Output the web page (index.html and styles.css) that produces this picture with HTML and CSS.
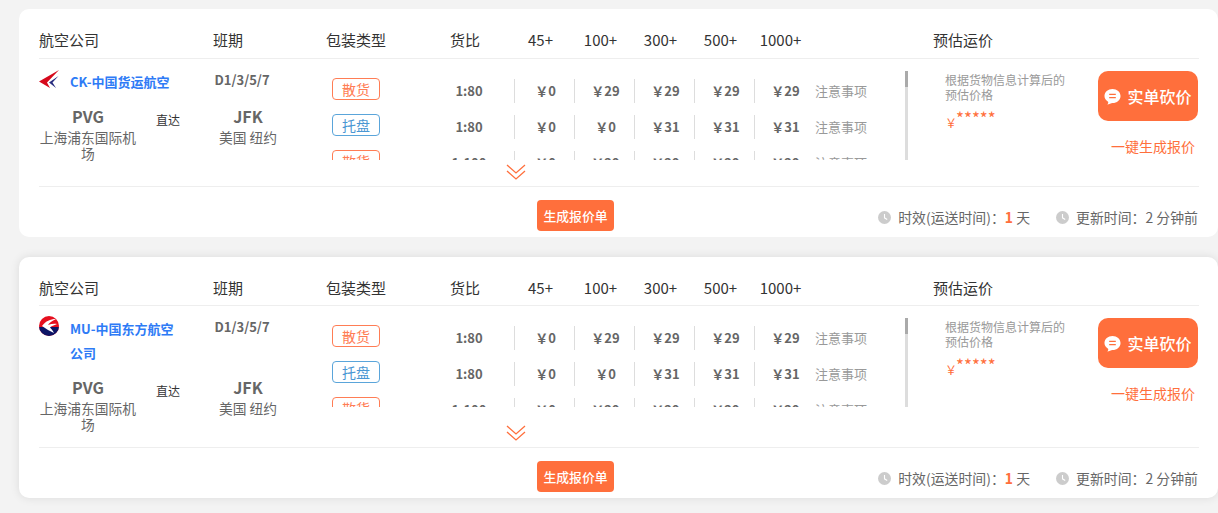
FILE: index.html
```html
<!DOCTYPE html>
<html lang="zh-CN">
<head>
<meta charset="utf-8">
<title>运价列表</title>
<link rel="stylesheet" href="styles.css">
</head>
<body>
<section class="card">
  <div class="head">
    <span class="h-air">航空公司</span><span class="h-sch">班期</span><span class="h-pack">包装类型</span><span class="h-ratio">货比</span>
    <span class="h-w">45+</span><span class="h-w">100+</span><span class="h-w">300+</span><span class="h-w">500+</span><span class="h-w">1000+</span>
    <span class="h-est">预估运价</span>
  </div>
  <div class="body">
    <div class="left">
      <div class="top">
        <svg class="logo" viewBox="0 0 20 20"><path d="M20 1 L0 12.500 L11 19 L8 13.500 Z" fill="#d6091c"/><path d="M19.500 7 L10 13.500 L17 19 L13.500 13.500 Z" fill="#2a2f80"/></svg>
        <a class="name">CK-中国货运航空</a>
        <span class="sch">D1/3/5/7</span>
      </div>
      <div class="route">
        <div class="port"><b>PVG</b><span>上海浦东国际机场</span></div>
        <div class="direct">直达</div>
        <div class="port dest"><b>JFK</b><span>美国 纽约</span></div>
      </div>
    </div>
    <div class="mid">
      <div class="scroll-wrap">
        <div class="rows">
          <div class="row"><span class="tag">散货</span><span class="ratio">1:80</span><span class="p">￥0</span><span class="p">￥29</span><span class="p">￥29</span><span class="p">￥29</span><span class="p">￥29</span><span class="note">注意事项</span></div>
          <div class="row"><span class="tag blue">托盘</span><span class="ratio">1:80</span><span class="p">￥0</span><span class="p">￥0</span><span class="p">￥31</span><span class="p">￥31</span><span class="p">￥31</span><span class="note">注意事项</span></div>
          <div class="row"><span class="tag">散货</span><span class="ratio">1:100</span><span class="p">￥0</span><span class="p">￥29</span><span class="p">￥29</span><span class="p">￥29</span><span class="p">￥29</span><span class="note">注意事项</span></div>
        </div>
        <div class="track"><div class="thumb"></div></div>
      </div>
      <svg class="chev" viewBox="0 0 20 16"><path d="M1 1 L10 9 L19 1 M1 7 L10 15 L19 7" fill="none" stroke="#ff6f3c" stroke-width="1.300"/></svg>
    </div>
    <div class="right">
      <div class="est"><p>根据货物信息计算后的预估价格</p><div class="stars"><i>￥</i>*****</div></div>
      <div class="act">
        <button class="bargain"><svg viewBox="0 0 18 18"><path d="M9 1 C13.700 1 17.500 4.300 17.500 8.500 C17.500 12.700 13.700 16 9 16 C7.500 16 5.500 17.500 3.500 17.500 C4.500 16.500 4.700 15.200 4.300 14.500 C2 13 .5 11 .5 8.500 C.5 4.300 4.300 1 9 1 Z" fill="#fff"/><path d="M5.500 6.800 H12.500 M5.500 10.200 H12.500" stroke="#ff6f3c" stroke-width="1.300"/></svg>实单砍价</button>
        <a class="quick">一键生成报价</a>
      </div>
    </div>
  </div>
  <div class="foot">
    <button class="gen">生成报价单</button>
    <div class="times">
      <span class="t"><svg class="clock" viewBox="0 0 12 12"><circle cx="6" cy="6" r="6" fill="#ccc"/><path d="M6 2.800 V6.300 L8.500 7.800" fill="none" stroke="#fff" stroke-width="1"/></svg>时效(运送时间)：<b>1</b> 天</span>
      <span class="t"><svg class="clock" viewBox="0 0 12 12"><circle cx="6" cy="6" r="6" fill="#ccc"/><path d="M6 2.800 V6.300 L8.500 7.800" fill="none" stroke="#fff" stroke-width="1"/></svg>更新时间：2 分钟前</span>
    </div>
  </div>
</section>

<section class="card raised">
  <div class="head">
    <span class="h-air">航空公司</span><span class="h-sch">班期</span><span class="h-pack">包装类型</span><span class="h-ratio">货比</span>
    <span class="h-w">45+</span><span class="h-w">100+</span><span class="h-w">300+</span><span class="h-w">500+</span><span class="h-w">1000+</span>
    <span class="h-est">预估运价</span>
  </div>
  <div class="body">
    <div class="left">
      <div class="top">
        <svg class="logo" viewBox="0 0 20 20"><defs><clipPath id="mu"><circle cx="10" cy="10" r="10"/></clipPath></defs><g clip-path="url(#mu)"><rect width="20" height="20" fill="#e60f1e"/><path d="M0 11 H20 V20 H0 Z" fill="#0d1566"/><path d="M3 10 C7 5 11 3 17 3 C13 5 10 7 9 9 C12 8 15 7.500 18 8 C15 9.500 12 10 11 11.500 C12.500 13 14 15 15 17 C11 15 7 13 3 10 Z" fill="#fff"/></g></svg>
        <a class="name">MU-中国东方航空公司</a>
        <span class="sch">D1/3/5/7</span>
      </div>
      <div class="route">
        <div class="port"><b>PVG</b><span>上海浦东国际机场</span></div>
        <div class="direct">直达</div>
        <div class="port dest"><b>JFK</b><span>美国 纽约</span></div>
      </div>
    </div>
    <div class="mid">
      <div class="scroll-wrap">
        <div class="rows">
          <div class="row"><span class="tag">散货</span><span class="ratio">1:80</span><span class="p">￥0</span><span class="p">￥29</span><span class="p">￥29</span><span class="p">￥29</span><span class="p">￥29</span><span class="note">注意事项</span></div>
          <div class="row"><span class="tag blue">托盘</span><span class="ratio">1:80</span><span class="p">￥0</span><span class="p">￥0</span><span class="p">￥31</span><span class="p">￥31</span><span class="p">￥31</span><span class="note">注意事项</span></div>
          <div class="row"><span class="tag">散货</span><span class="ratio">1:100</span><span class="p">￥0</span><span class="p">￥29</span><span class="p">￥29</span><span class="p">￥29</span><span class="p">￥29</span><span class="note">注意事项</span></div>
        </div>
        <div class="track"><div class="thumb"></div></div>
      </div>
      <svg class="chev" viewBox="0 0 20 16"><path d="M1 1 L10 9 L19 1 M1 7 L10 15 L19 7" fill="none" stroke="#ff6f3c" stroke-width="1.300"/></svg>
    </div>
    <div class="right">
      <div class="est"><p>根据货物信息计算后的预估价格</p><div class="stars"><i>￥</i>*****</div></div>
      <div class="act">
        <button class="bargain"><svg viewBox="0 0 18 18"><path d="M9 1 C13.700 1 17.500 4.300 17.500 8.500 C17.500 12.700 13.700 16 9 16 C7.500 16 5.500 17.500 3.500 17.500 C4.500 16.500 4.700 15.200 4.300 14.500 C2 13 .5 11 .5 8.500 C.5 4.300 4.300 1 9 1 Z" fill="#fff"/><path d="M5.500 6.800 H12.500 M5.500 10.200 H12.500" stroke="#ff6f3c" stroke-width="1.300"/></svg>实单砍价</button>
        <a class="quick">一键生成报价</a>
      </div>
    </div>
  </div>
  <div class="foot">
    <button class="gen">生成报价单</button>
    <div class="times">
      <span class="t"><svg class="clock" viewBox="0 0 12 12"><circle cx="6" cy="6" r="6" fill="#ccc"/><path d="M6 2.800 V6.300 L8.500 7.800" fill="none" stroke="#fff" stroke-width="1"/></svg>时效(运送时间)：<b>1</b> 天</span>
      <span class="t"><svg class="clock" viewBox="0 0 12 12"><circle cx="6" cy="6" r="6" fill="#ccc"/><path d="M6 2.800 V6.300 L8.500 7.800" fill="none" stroke="#fff" stroke-width="1"/></svg>更新时间：2 分钟前</span>
    </div>
  </div>
</section>
</body>
</html>
```
FILE: styles.css
```css
* { box-sizing: border-box; }
html, body { margin: 0; padding: 0; }
body {
  background: #f3f3f3;
  padding: 9px 0 0 19px;
  font-family: "Noto Sans CJK SC", "Noto Sans", sans-serif;
  color: #333;
  overflow: hidden;
}
p { margin: 0; }
.card {
  width: 1199px;
  height: 228px;
  margin-bottom: 20px;
  padding: 0 19px 0 20px;
  background: #fff;
  border-radius: 10px;
  display: flex;
  flex-direction: column;
}
.card.raised {
  height: 241px;
  box-shadow: 0 0 10px rgba(0, 0, 0, .1);
}
.head {
  height: 50px;
  flex: none;
  display: flex;
  align-items: center;
  padding-top: 12px;
  font-size: 15px;
  line-height: 20px;
  border-bottom: 1px solid #eee;
  color: #333;
}
.raised .head { height: 49px; padding-top: 14px; }
.head span { flex: none; white-space: nowrap; }
.h-air { width: 174px; }
.h-sch { width: 113px; }
.h-pack { width: 124px; }
.h-ratio { width: 60px; }
.h-w { width: 60px; text-align: center; padding-left: 1px; }
.h-est { margin-left: 123px; }

.body {
  flex: 1;
  display: flex;
  padding: 12px 0 6px;
  border-bottom: 1px solid #eee;
  min-height: 0;
}
.left { width: 287px; flex: none; padding-bottom: 9px; }
.top { display: flex; align-items: flex-start; height: 24px; }
.raised .top { height: 48px; }
.logo { width: 20px; height: 20px; flex: none; margin: -2px 11px 0 0; }
.name {
  width: 110px;
  flex: none;
  margin-top: -1px;
  font-size: 13px;
  font-weight: 700;
  line-height: 24px;
  color: #2e7bf6;
}
.sch {
  margin-left: 34.500px;
  font-size: 13px;
  font-weight: 700;
  line-height: 18px;
  color: #666;
}
.route { display: flex; margin-top: 11px; }
.port { width: 98px; text-align: center; flex: none; display: flex; flex-direction: column; color: #666; }
.port b { font-size: 16px; line-height: 20px; margin-bottom: 3px; }
.port span { font-size: 13.750px; line-height: 16px; }
.direct { width: 62px; flex: none; padding-top: 4px; text-align: center; font-size: 12px; line-height: 20px; color: #333; }
.port.dest { margin-left: 10px; width: 78px; }
.mid { width: 584px; flex: none; display: flex; flex-direction: column; }
.scroll-wrap { height: 89px; display: flex; flex: none; overflow: hidden; }
.rows { width: 579px; flex: none; padding-top: 2px; }
.row { height: 36px; display: flex; align-items: center; }
.tag {
  width: 48px;
  height: 22px;
  margin: 0 44px 4px 6px;
  flex: none;
  border: 1px solid #ff7d55;
  border-radius: 4px;
  color: #ff7d55;
  font-size: 14px;
  line-height: 20px;
  text-align: center;
}
.tag.blue { border-color: #5aa5da; color: #4a97d3; }
.ratio { width: 90px; flex: none; margin-bottom: 2px; text-align: center; font-size: 13px; font-weight: 700; color: #666; }
.p {
  width: 60px;
  height: 24px;
  flex: none;
  border-left: 1px solid #ddd;
  padding-left: 2px;
  text-align: center;
  font-size: 13px;
  font-weight: 700;
  line-height: 24px;
  color: #666;
}
.note { margin: 0 0 2px 1px; font-size: 13px; color: #999; white-space: nowrap; }
.track { width: 3px; height: 89px; flex: none; background: #ddd; }
.thumb { height: 16px; background: #aaa; }
.chev { width: 20px; height: 16px; margin: auto 0 0 180px; flex: none; }

.right { flex: 1; display: flex; min-width: 0; padding-left: 35px; }
.est { width: 153px; flex: none; padding-top: 1px; }
.est p { width: 122px; font-size: 12px; line-height: 15px; color: #999; }
.stars { font-size: 17px; line-height: 20px; margin-top: 6px; padding-left: 0; color: #ff6f3c; display: flex; }
.stars i { font-style: normal; font-size: 12px; line-height: 30px; margin-right: -1px; }
.act { width: 100px; flex: none; display: flex; flex-direction: column; }
.bargain {
  width: 100px;
  height: 50px;
  padding: 0;
  border: 0;
  border-radius: 10px;
  background: #ff6f3c;
  color: #fff;
  font: inherit;
  font-size: 16px;
  font-weight: 500;
  display: flex;
  align-items: center;
  justify-content: center;
  gap: 6px;
}
.bargain svg { width: 17px; height: 17px; flex: none; }
.quick { margin-top: 14px; font-size: 14px; line-height: 22px; color: #ff6f3c; text-align: right; padding-right: 3px; white-space: nowrap; }

.foot { flex: none; height: 50px; display: flex; align-items: flex-start; padding-top: 13px; }
.gen {
  width: 77px;
  height: 31px;
  padding: 0;
  margin-left: 498px;
  border: 0;
  border-radius: 4px;
  background: #ff6f3c;
  color: #fff;
  font: inherit;
  font-size: 12.800px;
  font-weight: 500;
}
.times { margin-left: auto; display: flex; gap: 26px; margin-top: 6px; padding-right: 1px; font-size: 13.900px; line-height: 22px; color: #666; }
.t { display: flex; align-items: center; white-space: pre; }
.t b { color: #ff6f3c; }
.clock { width: 13px; height: 13px; margin-right: 7px; flex: none; }
```
